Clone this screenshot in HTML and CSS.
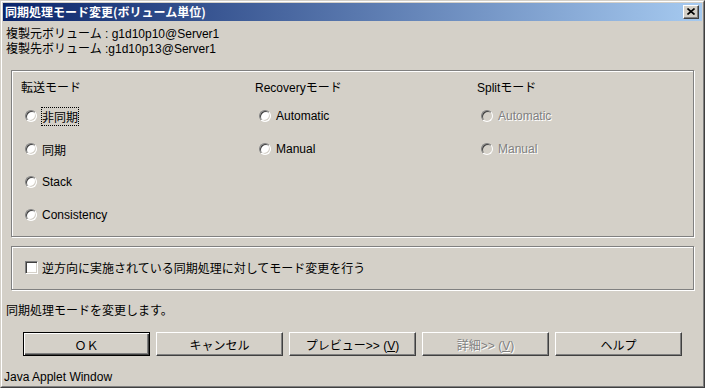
FILE: index.html
```html
<!DOCTYPE html>
<html lang="ja">
<head>
    <meta charset="UTF-8">
    <title>同期処理モード変更(ボリューム単位)</title>
    <link rel="stylesheet" href="styles.css">
</head>
<body>
    <div class="window">
        <div class="frame">
            <div class="titlebar">
                <span class="title">同期処理モード変更(ボリューム単位)</span>
                <button class="close">
                    <svg width="8" height="7" viewBox="0 0 8 7">
                        <path d="M0.5 0.5 L7.5 6.5 M7.5 0.5 L0.5 6.5" stroke="#000" stroke-width="1.6" fill="none"/>
                    </svg>
                </button>
            </div>

            <div class="info">
                <div>複製元ボリューム : g1d10p10@Server1</div>
                <div>複製先ボリューム :g1d10p13@Server1</div>
            </div>

            <div class="group modes">
                <div class="col">
                    <div class="head">転送モード</div>
                    <label class="radio"><span class="dot"></span><span class="focus">非同期</span></label>
                    <label class="radio"><span class="dot"></span>同期</label>
                    <label class="radio"><span class="dot"></span>Stack</label>
                    <label class="radio"><span class="dot"></span>Consistency</label>
                </div>
                <div class="col">
                    <div class="head">Recoveryモード</div>
                    <label class="radio"><span class="dot"></span>Automatic</label>
                    <label class="radio"><span class="dot"></span>Manual</label>
                </div>
                <div class="col">
                    <div class="head">Splitモード</div>
                    <label class="radio disabled"><span class="dot"></span>Automatic</label>
                    <label class="radio disabled"><span class="dot"></span>Manual</label>
                </div>
            </div>

            <div class="group reverse">
                <label class="check"><span class="box"></span>逆方向に実施されている同期処理に対してモード変更を行う</label>
            </div>

            <div class="status">同期処理モードを変更します。</div>

            <div class="buttons">
                <button class="btn default">ＯＫ</button>
                <button class="btn">キャンセル</button>
                <button class="btn">プレビュー&gt;&gt; (<u>V</u>)</button>
                <button class="btn disabled">詳細&gt;&gt; (<u>V</u>)</button>
                <button class="btn">ヘルプ</button>
            </div>

            <div class="applet">Java Applet Window</div>
        </div>
    </div>
</body>
</html>
```

FILE: styles.css
```css
body {
    margin: 0;
    background-color: #d4d0c8;
    font-family: "Liberation Sans", "Noto Sans CJK JP", sans-serif;
    font-size: 12px;
    color: #000;
}
.window {
    width: 705px;
    height: 388px;
    box-sizing: border-box;
    border: 1px solid;
    border-color: #d4d0c8 #404040 #404040 #d4d0c8;
}
.frame {
    height: 100%;
    box-sizing: border-box;
    border: 1px solid;
    border-color: #fff #808080 #808080 #fff;
    padding: 1px;
    display: flex;
    flex-direction: column;
}
.titlebar {
    height: 18px;
    display: flex;
    align-items: center;
    justify-content: space-between;
    padding: 0 3px 0 2px;
    background: linear-gradient(to right, #0a246a, #a6caf0);
}
.title {
    color: #fff;
    font-weight: bold;
    font-size: 12px;
    font-family: "Noto Sans CJK JP", sans-serif;
}
.close {
    width: 16px;
    height: 14px;
    padding: 0;
    display: flex;
    align-items: center;
    justify-content: center;
    background-color: #d4d0c8;
    border: 1px solid;
    border-color: #fff #404040 #404040 #fff;
    box-shadow: inset -1px -1px #808080;
}
.info {
    margin-top: 6px;
    padding-left: 3px;
    line-height: 15px;
}
.group {
    margin: 0 8px;
    box-sizing: border-box;
    border: 1px solid #808080;
    box-shadow: inset 1px 1px #fff, 1px 1px #fff;
}
.modes {
    margin-top: 13px;
    height: 167px;
    padding: 10px 0 0 9px;
    display: grid;
    grid-template-columns: 234px 222px 1fr;
}
.col {
    display: flex;
    flex-direction: column;
}
.head {
    line-height: 15px;
    margin-bottom: 13px;
}
.radio {
    display: flex;
    align-items: center;
    height: 15px;
    margin-bottom: 18px;
    padding-left: 4px;
}
.dot {
    width: 12px;
    height: 12px;
    box-sizing: border-box;
    border-radius: 50%;
    border: 1px solid;
    border-color: #808080 #fff #fff #808080;
    box-shadow: inset 1px 1px #404040, inset -1px -1px #d4d0c8;
    background-color: #fff;
    margin-right: 5px;
}
.focus {
    outline: 1px dotted #000;
    outline-offset: 0;
}
.radio.disabled {
    color: #808080;
    text-shadow: 1px 1px #fff;
}
.radio.disabled .dot {
    background-color: #d4d0c8;
}
.reverse {
    margin-top: 9px;
    height: 45px;
    padding-left: 13px;
    display: flex;
    align-items: center;
}
.check {
    display: flex;
    align-items: center;
}
.box {
    width: 13px;
    height: 13px;
    box-sizing: border-box;
    border: 1px solid;
    border-color: #808080 #fff #fff #808080;
    box-shadow: inset 1px 1px #404040, inset -1px -1px #d4d0c8;
    background-color: #fff;
    margin-right: 4px;
}
.status {
    margin-top: 14px;
    padding-left: 3px;
    line-height: 15px;
}
.buttons {
    margin-top: 13px;
    padding-left: 20px;
    display: flex;
    gap: 6px;
}
.btn {
    width: 127px;
    height: 24px;
    box-sizing: border-box;
    background-color: #d4d0c8;
    font-family: "Liberation Sans", "Noto Sans CJK JP", sans-serif;
    font-size: 12px;
    color: #000;
    border: 1px solid;
    border-color: #fff #404040 #404040 #fff;
    box-shadow: inset -1px -1px #808080;
    padding: 0;
}
.btn.default {
    border: 1px solid #000;
    box-shadow: inset 1px 1px #fff, inset -1px -1px #404040, inset -2px -2px #808080;
}
.btn.disabled {
    color: #808080;
    text-shadow: 1px 1px #fff;
}
.applet {
    margin-top: 14px;
    padding-left: 1px;
    line-height: 15px;
}
```
